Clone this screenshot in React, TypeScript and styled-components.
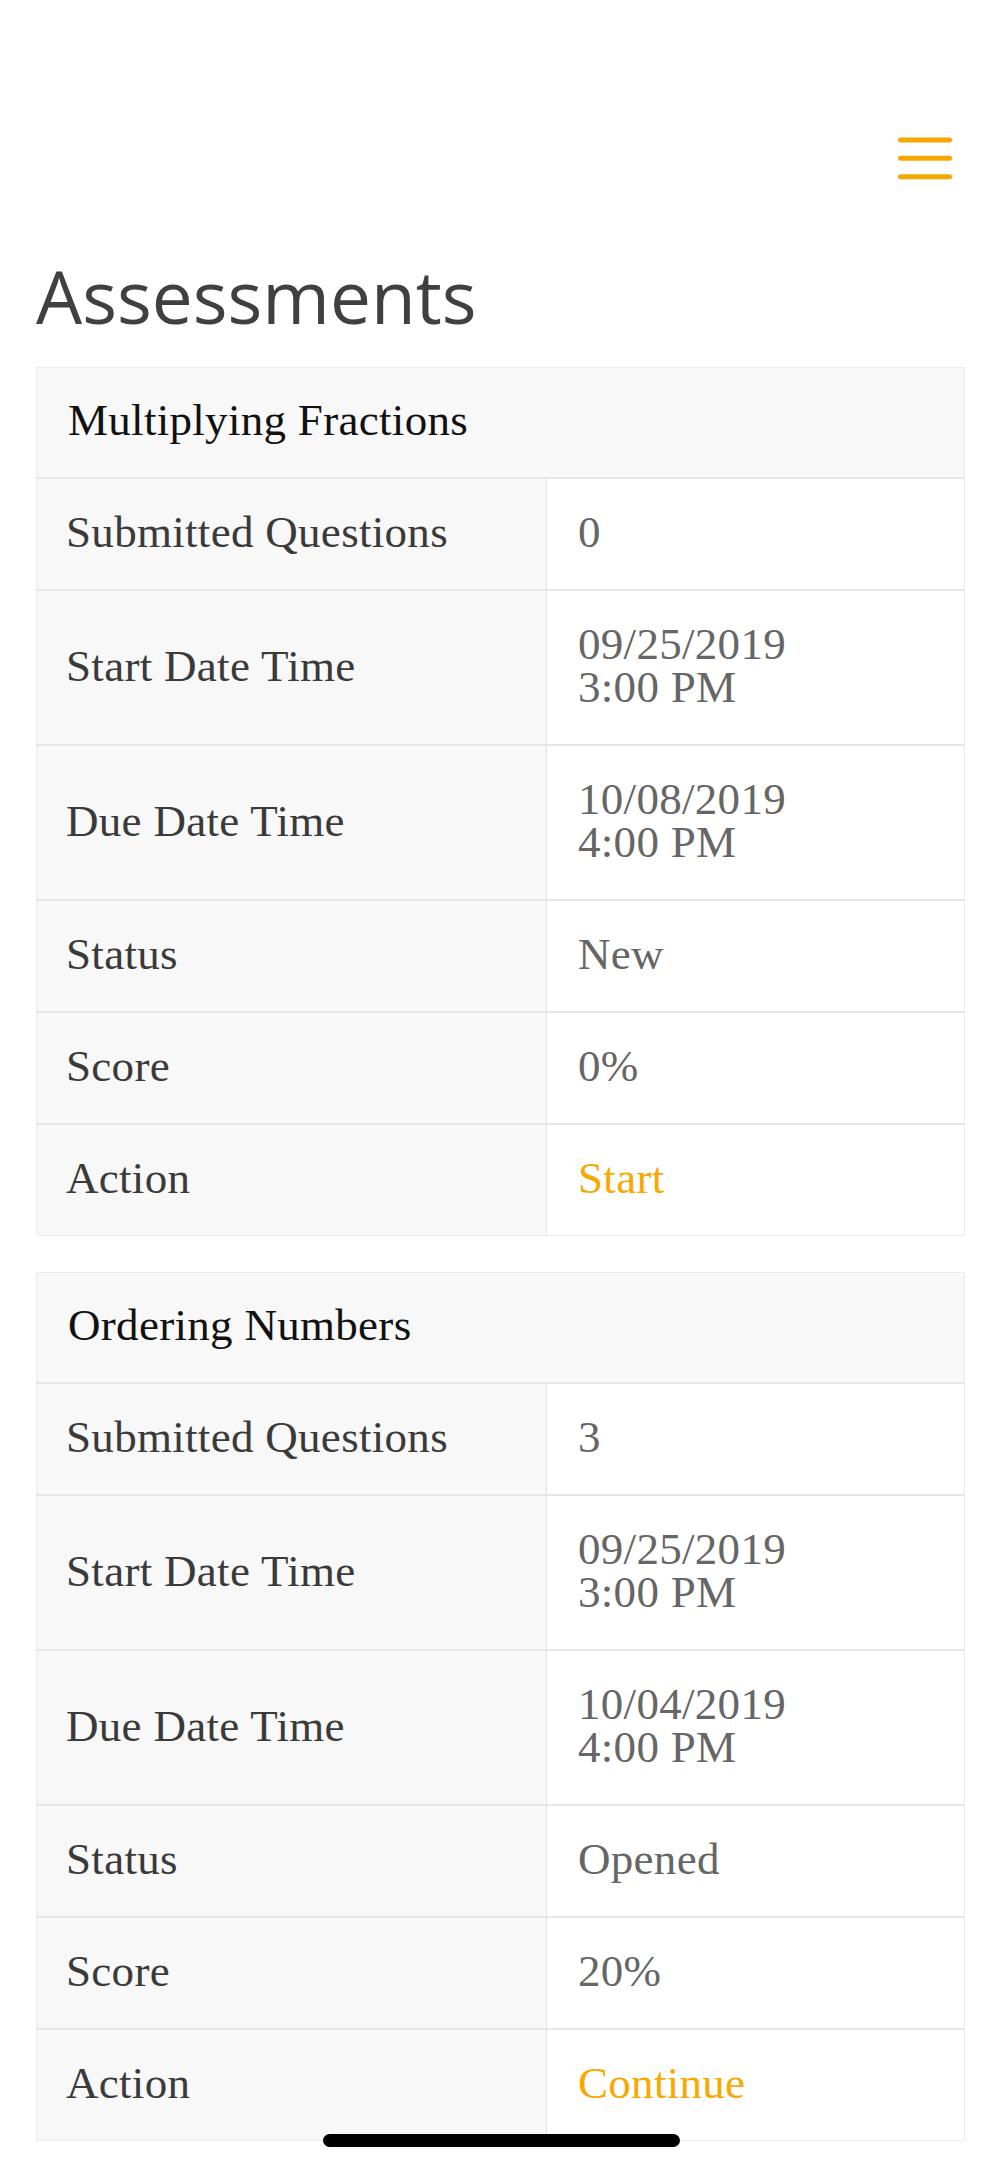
import React from "react";
import styled, { createGlobalStyle } from "styled-components";

type Field = {
  label: string;
  value: string[];
  isAction?: boolean;
};

type Assessment = {
  id: string;
  title: string;
  fields: Field[];
};

const assessments: Assessment[] = [
  {
    id: "multiplying-fractions",
    title: "Multiplying Fractions",
    fields: [
      { label: "Submitted Questions", value: ["0"] },
      { label: "Start Date Time", value: ["09/25/2019", "3:00 PM"] },
      { label: "Due Date Time", value: ["10/08/2019", "4:00 PM"] },
      { label: "Status", value: ["New"] },
      { label: "Score", value: ["0%"] },
      { label: "Action", value: ["Start"], isAction: true }
    ]
  },
  {
    id: "ordering-numbers",
    title: "Ordering Numbers",
    fields: [
      { label: "Submitted Questions", value: ["3"] },
      { label: "Start Date Time", value: ["09/25/2019", "3:00 PM"] },
      { label: "Due Date Time", value: ["10/04/2019", "4:00 PM"] },
      { label: "Status", value: ["Opened"] },
      { label: "Score", value: ["20%"] },
      { label: "Action", value: ["Continue"], isAction: true }
    ]
  }
];

const App: React.FC = () => {
  return (
    <Page>
      <GlobalStyle />
      <Nav>
        <MenuButton aria-label="Menu">
          <svg width="54" height="46" viewBox="0 0 54 46" fill="none">
            <path
              d="M2.5 3H51.5M2.5 21.3H51.5M2.5 39.7H51.5"
              stroke="#f7a800"
              strokeWidth="5"
              strokeLinecap="round"
            />
          </svg>
        </MenuButton>
      </Nav>
      <Title>Assessments</Title>
      <CardList>
        {assessments.map(assessment => (
          <Card key={assessment.id}>
            <CardHeader>{assessment.title}</CardHeader>
            {assessment.fields.map(field => (
              <Row key={field.label}>
                <Label>{field.label}</Label>
                <Value>
                  {field.value.map(line =>
                    field.isAction ? (
                      <ActionLink key={line} href="#">
                        {line}
                      </ActionLink>
                    ) : (
                      <Line key={line}>{line}</Line>
                    )
                  )}
                </Value>
              </Row>
            ))}
          </Card>
        ))}
      </CardList>
      <HomeIndicator />
    </Page>
  );
};

const GlobalStyle = createGlobalStyle`
  html, body {
    margin: 0;
    padding: 0;
    background: #ffffff;
  }
  * {
    box-sizing: border-box;
  }
`;

const Page = styled.div`
  position: relative;
  width: 1001px;
  min-height: 2167px;
  padding-bottom: 25px;
  background: #ffffff;
`;

const Nav = styled.header`
  display: flex;
  justify-content: flex-end;
  align-items: flex-start;
  height: 253px;
  padding: 137px 49px 0;
`;

const MenuButton = styled.button`
  display: block;
  padding: 0;
  border: 0;
  background: none;
  line-height: 0;
  cursor: pointer;
`;

const Title = styled.h1`
  margin: 0;
  padding: 0 36px;
  font-family: "Open Sans", "Noto Sans", sans-serif;
  font-size: 73px;
  font-weight: 400;
  line-height: 86px;
  color: #404040;
`;

const CardList = styled.div`
  display: flex;
  flex-direction: column;
  gap: 36px;
  padding: 28px 36px 0;
`;

const Card = styled.section`
  border: 1px solid #ececec;
  font-family: "Liberation Serif", "Times New Roman", serif;
  font-size: 45px;
  line-height: 43px;
  letter-spacing: 0.3px;
`;

const CardHeader = styled.div`
  padding: 31px 31px 35px;
  background: #f8f8f8;
  border-bottom: 2px solid #e6e6e6;
  color: #111111;
`;

const Row = styled.div`
  display: grid;
  grid-template-columns: 510px 1fr;
  border-bottom: 2px solid #e6e6e6;

  &:last-child {
    border-bottom: 0;
  }
`;

const Label = styled.div`
  display: flex;
  align-items: center;
  padding: 32px 29px 35px;
  background: #f8f8f8;
  border-right: 1px solid #e2e2e2;
  color: #3a3a3a;
`;

const Value = styled.div`
  display: flex;
  flex-direction: column;
  padding: 32px 30px 35px 31px;
  background: #ffffff;
  color: #666666;
`;

const Line = styled.span``;

const ActionLink = styled.a`
  color: #f9a800;
  text-decoration: none;
`;

const HomeIndicator = styled.div`
  position: absolute;
  left: 50%;
  bottom: 20px;
  width: 357px;
  height: 13px;
  margin-left: -178px;
  border-radius: 7px;
  background: #000000;
`;

export default App;
